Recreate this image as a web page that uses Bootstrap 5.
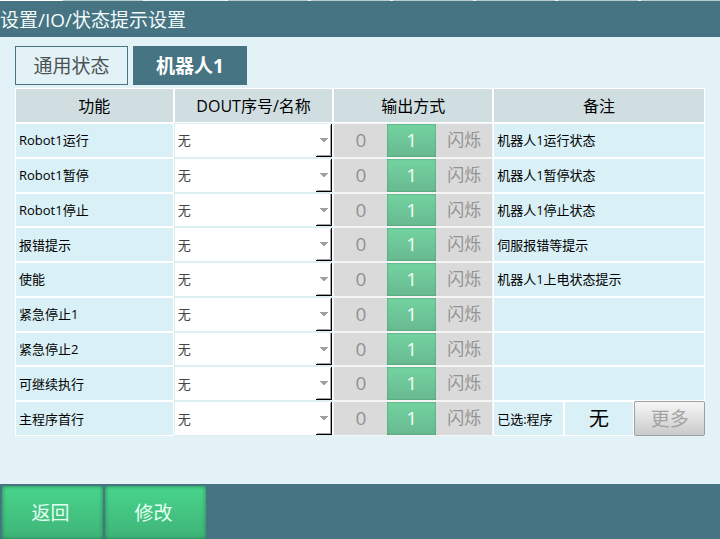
<!DOCTYPE html>
<html lang="zh-CN">
<head>
<meta charset="utf-8">
<meta name="viewport" content="width=device-width, initial-scale=1">
<title>设置/IO/状态提示设置</title>
<link href="https://cdn.jsdelivr.net/npm/bootstrap@5.3.0/dist/css/bootstrap.min.css" rel="stylesheet">
<style>
  body { font-family: "Open Sans", "Noto Sans CJK SC", sans-serif; background: #e3f2f7; color: #000; }
  .edge-strip { height: 1px; gap: 3px; background: #f4fafb; }
  .edge-strip span { background: #b9cdd0; flex: 1 1 80px; }
  .edge-strip span:first-child { background: #fff; flex: 0 0 60px; }
  .edge-strip span:nth-child(3) { background: #e0f0f3; }
  .title-bar { height: 36px; background: #467482; }
  .title-bar h1 { font-size: 19px; line-height: 38px; color: #f2fafb; }
  .page-main { padding: 9px 15px 16px; }
  .state-tabs { gap: 5px; }
  .state-tabs .btn { width: 113px; height: 39px; padding: 0; border: 1px solid #467482; border-radius: 0; font-size: 19px; line-height: 39px; color: #4b5254; }
  .state-tabs .btn.active { width: 114px; background: #467482; border-color: #467482; color: #fff; font-weight: 700; }
  .io-table { table-layout: fixed; width: 100%; height: 348px; margin-top: 3px; border-collapse: separate; border-spacing: 0; font-size: 13px; line-height: 20px; }
  .c-name { width: 23%; }
  .c-dout, .c-mode { width: 23.15%; }
  .io-table th, .io-table td { height: 34px; border: 1px solid #fff; padding: 0; background: #d9f0f6; font-weight: 400; vertical-align: middle; }
  .io-table thead th { height: 35px; background: #d1dee1; font-size: 16px; line-height: 24px; text-align: center; }
  .io-table tbody th, .io-table .remark { padding: 0 3px; }
  .io-table .pick { background: #fff; border-color: #deeff2; border-right-color: #fff; }
  .io-table .mode { background: #dadada; border-color: #f5f5f5; }
  .dout { display: block; width: 100%; height: 100%; min-height: 32px; padding: 0 18px 0 3px; border: 0; border-radius: 0; appearance: none; font-size: 13px; color: #444; opacity: 1;
    background:
      url("data:image/svg+xml,%3Csvg xmlns='http://www.w3.org/2000/svg' width='8' height='5'%3E%3Cpath d='M0 0h8v1H7v1H6v1H5v1H3V3H2V2H1V1H0z' fill='%23a0a0a0'/%3E%3C/svg%3E") right 4px top 14px no-repeat,
      linear-gradient(#000, #000) right 0 top 0 / 1px 100% no-repeat,
      linear-gradient(#000, #000) right 0 bottom 0 / 16px 1px no-repeat,
      linear-gradient(#a0a0a0, #a0a0a0) right 1px bottom 1px / 1px 31px no-repeat,
      linear-gradient(#a0a0a0, #a0a0a0) right 1px bottom 1px / 14px 1px no-repeat,
      #fff; }
  .mode-group { display: grid; grid-template-columns: 53fr 49fr 56fr; height: 100%; min-height: 32px; }
  .mode-group label { font-size: 19px; line-height: 32px; text-align: center; color: #929292; white-space: nowrap; }
  .mode-group label.flash { font-size: 17px; }
  .mode-group .btn-check:checked + label { color: #f2fff8; background: linear-gradient(#73d3a0, #68b98f); box-shadow: inset 0 0 2px #3d8c66; }
  .io-table .chosen { font-size: 20px; line-height: 28px; text-align: center; }
  .io-table .more-cell { border: 0; }
  .more-btn { display: block; width: 100%; height: 100%; min-height: 34px; padding: 0; border: 1px solid #a0a0a0; border-radius: 2px; font-size: 19px; line-height: 30px; color: #a3a3a3; background: linear-gradient(#f6f6f6, #e0e0e0 50%, #c9c9c9); }
  .foot-bar { height: 55px; background: #467482; gap: 2px; padding: 2px 2px 0; }
  .foot-bar .btn { width: 101px; padding: 2px 4px 0 0; border: 0; border-radius: 2px; font-size: 19px; color: #e4fff1; background: linear-gradient(#48d58c, #3fb377); box-shadow: inset 0 0 4px #1f8050; }
</style>
</head>
<body class="d-flex flex-column min-vh-100">
  <div class="edge-strip d-flex" aria-hidden="true"><span></span><span></span><span></span><span></span><span></span><span></span><span></span><span></span><span></span></div>
  <header class="title-bar"><h1 class="m-0 fw-normal">设置/IO/状态提示设置</h1></header>
  <main class="page-main flex-grow-1">
    <div class="state-tabs d-flex">
      <button type="button" class="btn">通用状态</button>
      <button type="button" class="btn active" aria-current="true">机器人1</button>
    </div>
    <table class="io-table">
      <colgroup><col class="c-name"><col class="c-dout"><col class="c-mode"><col><col><col></colgroup>
      <thead><tr><th scope="col">功能</th><th scope="col">DOUT序号/名称</th><th scope="col">输出方式</th><th scope="col" colspan="3">备注</th></tr></thead>
      <tbody id="rows"></tbody>
    </table>
  </main>
  <footer class="foot-bar d-flex">
    <button type="button" class="btn">返回</button>
    <button type="button" class="btn">修改</button>
  </footer>
<script>
  const rows = [
    ["Robot1运行", "机器人1运行状态"], ["Robot1暂停", "机器人1暂停状态"], ["Robot1停止", "机器人1停止状态"],
    ["报错提示", "伺服报错等提示"], ["使能", "机器人1上电状态提示"], ["紧急停止1", ""], ["紧急停止2", ""],
    ["可继续执行", ""], ["主程序首行", null]
  ];
  document.getElementById("rows").innerHTML = rows.map(([name, note], i) => `
    <tr>
      <th scope="row"><label for="dout${i}">${name}</label></th>
      <td class="pick"><select class="dout" id="dout${i}" disabled><option>无</option></select></td>
      <td class="mode"><div class="mode-group" role="group" aria-label="输出方式">
        <div class="d-grid"><input class="btn-check" type="radio" name="mode${i}" id="m${i}a" disabled><label for="m${i}a">0</label></div>
        <div class="d-grid"><input class="btn-check" type="radio" name="mode${i}" id="m${i}b" checked><label for="m${i}b">1</label></div>
        <div class="d-grid"><input class="btn-check" type="radio" name="mode${i}" id="m${i}c" disabled><label class="flash" for="m${i}c">闪烁</label></div>
      </div></td>
      ${note === null
        ? `<td class="remark text-nowrap">已选:程序</td><td class="chosen">无</td><td class="more-cell"><button type="button" class="more-btn" disabled>更多</button></td>`
        : `<td class="remark" colspan="3">${note}</td>`}
    </tr>`).join("");
</script>
<script src="https://cdn.jsdelivr.net/npm/bootstrap@5.3.0/dist/js/bootstrap.bundle.min.js"></script>
</body>
</html>
